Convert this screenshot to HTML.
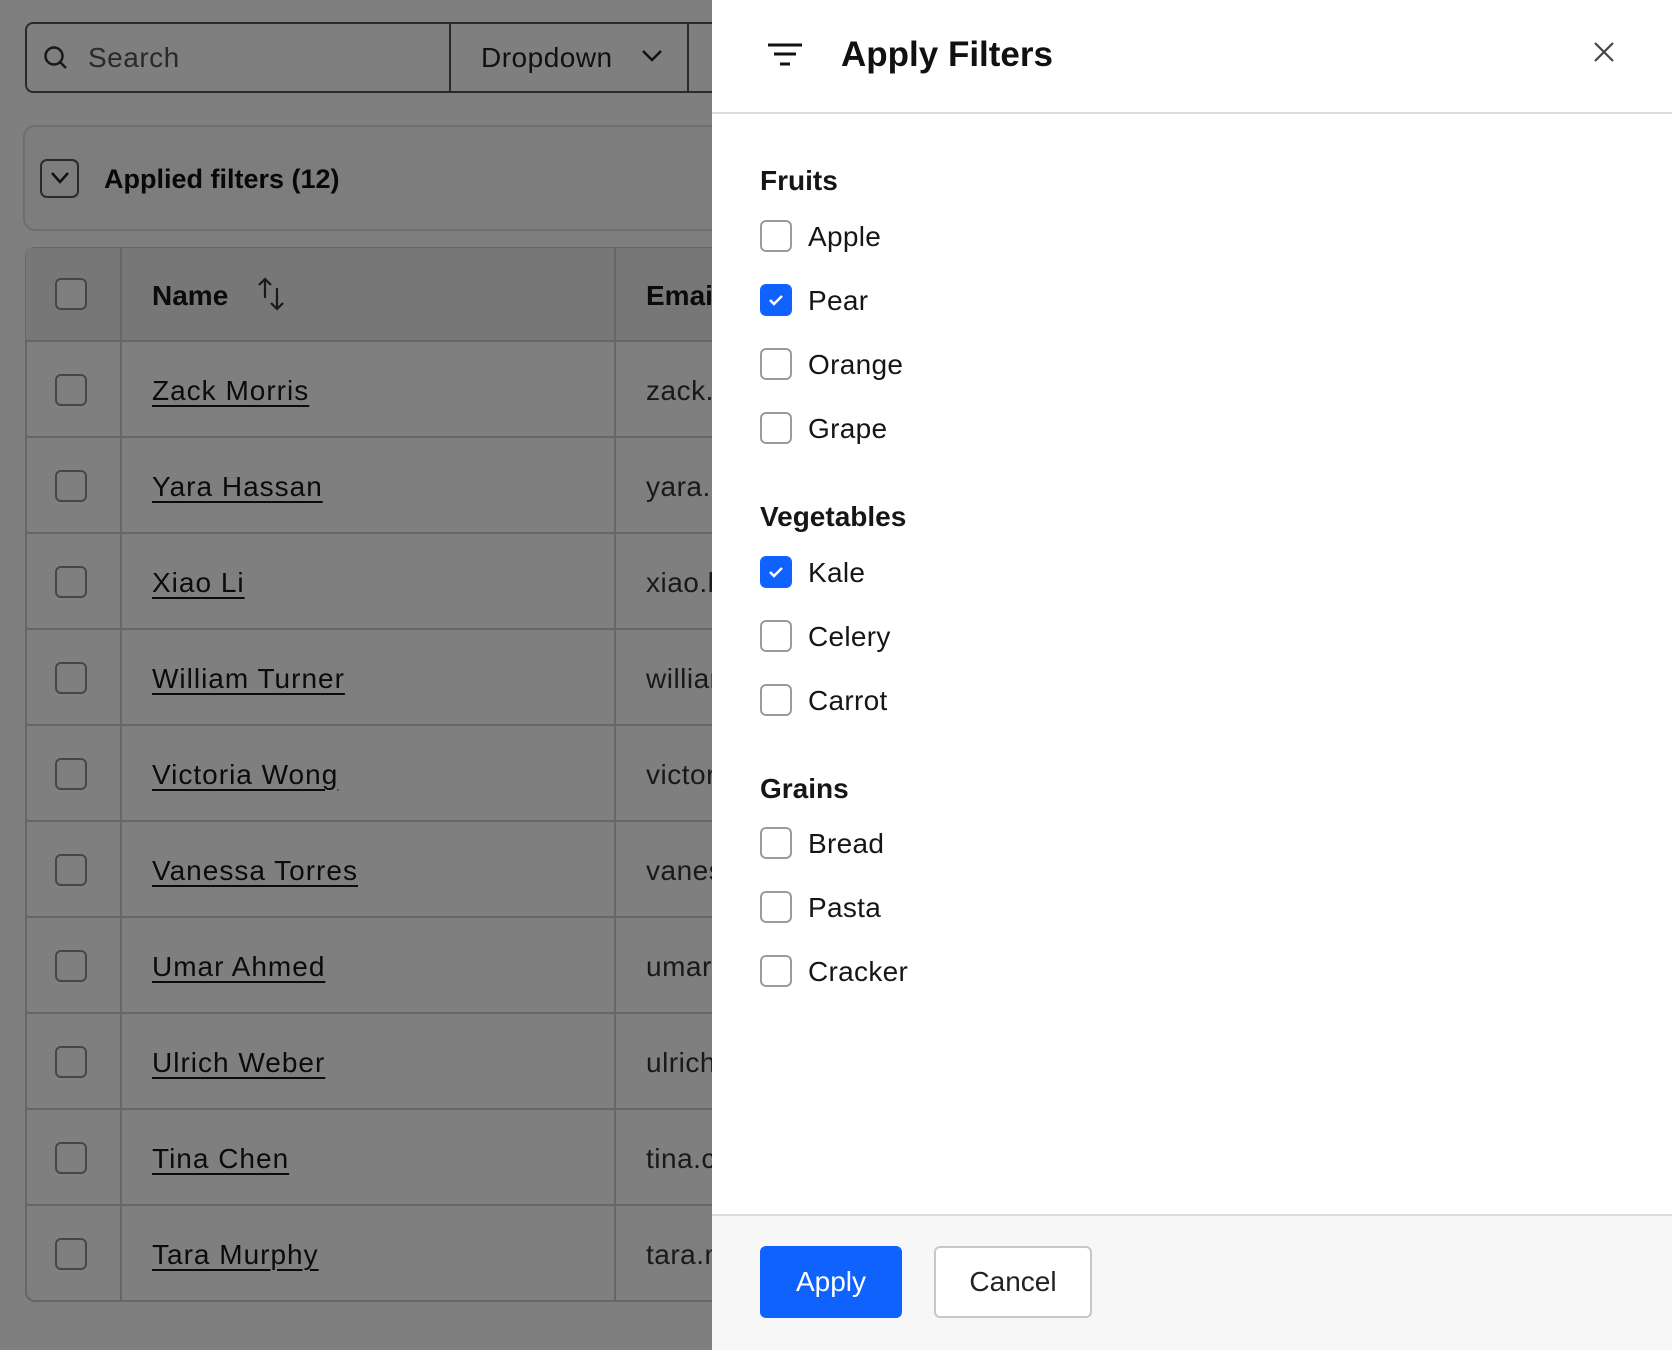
<!DOCTYPE html>
<html><head><meta charset="utf-8"><style>
*{box-sizing:border-box;margin:0;padding:0}
body{width:1672px;height:1350px;overflow:hidden;font-family:"Liberation Sans",sans-serif;background:#fff;position:relative;color:#161616}
.abs{position:absolute}
.cb{position:absolute;width:32px;height:32px;border:2px solid #8d8d94;border-radius:6px;background:#fff}
.name{position:absolute;left:152px;font-size:28px;letter-spacing:1px;text-decoration:underline;text-underline-offset:5px;text-decoration-thickness:2px}
.email{position:absolute;left:646px;font-size:28px;color:#333;letter-spacing:0.5px}
.hline{position:absolute;left:25px;width:700px;height:2px;background:#ccc}
.overlay{position:absolute;left:0;top:0;width:712px;height:1350px;background:rgba(0,0,0,0.5)}
.panel{position:absolute;left:712px;top:0;width:960px;height:1350px;background:#fff}
.sec{position:absolute;left:48px;font-size:28px;font-weight:bold}
.item{position:absolute;left:48px;height:32px}
.item .box{position:absolute;left:0;top:0;width:32px;height:32px;border:2px solid #9a9aa2;border-radius:6px}
.item .box.on{background:#0f62fe;border-color:#0f62fe}
.item span{position:absolute;left:48px;top:0px;font-size:28px;white-space:nowrap;line-height:34px;letter-spacing:0.3px}
</style></head><body>
<div class="abs" style="left:25px;top:22px;width:720px;height:71px;border:2px solid #555;border-radius:8px"></div>
<div class="abs" style="left:449px;top:22px;width:2px;height:71px;background:#555"></div>
<div class="abs" style="left:687px;top:22px;width:2px;height:71px;background:#555"></div>
<svg class="abs" style="left:42px;top:44px" width="28" height="28" viewBox="0 0 28 28"><circle cx="12" cy="12" r="8.5" fill="none" stroke="#333" stroke-width="2.5"/><path d="M18 18l6 6" stroke="#333" stroke-width="2.5"/></svg>
<div class="abs" style="left:88px;top:42px;font-size:28px;color:#555;letter-spacing:0.5px">Search</div>
<div class="abs" style="left:481px;top:42px;font-size:28px;color:#222;letter-spacing:0.5px">Dropdown</div>
<svg class="abs" style="left:640px;top:48px" width="24" height="16" viewBox="0 0 24 16"><path d="M3 3l9 9 9-9" fill="none" stroke="#222" stroke-width="2.5"/></svg>

<div class="abs" style="left:23px;top:125px;width:720px;height:106px;border:2px solid #ddd;border-radius:12px;background:#fafafa"></div>
<div class="abs" style="left:40px;top:159px;width:39px;height:39px;border:2px solid #555;border-radius:7px"></div>
<svg class="abs" style="left:48px;top:170px" width="24" height="16" viewBox="0 0 24 16"><path d="M4 3l8 9 8-9" fill="none" stroke="#222" stroke-width="2.5"/></svg>
<div class="abs" style="left:104px;top:164px;font-size:27px;font-weight:bold;color:#111">Applied filters (12)</div>

<div class="abs" style="left:25px;top:247px;width:720px;height:1055px;border:2px solid #ccc;border-radius:10px"></div>
<div class="abs" style="left:26px;top:248px;width:700px;height:93px;background:#eee"></div>
<div class="abs" style="left:120px;top:248px;width:2px;height:1053px;background:#ccc"></div>
<div class="abs" style="left:614px;top:248px;width:2px;height:1053px;background:#ccc"></div>
<div class="hline" style="top:340px"></div>
<div class="cb" style="left:55px;top:278px"></div>
<div class="abs" style="left:152px;top:280px;font-size:28px;font-weight:bold">Name</div>
<svg class="abs" style="left:256px;top:276px" width="32" height="36" viewBox="0 0 32 36"><path d="M9 22V3M3 9l6-6 6 6M21 12v21M15 27l6 6 6-6" fill="none" stroke="#333" stroke-width="2.2"/></svg>
<div class="abs" style="left:646px;top:280px;font-size:28px;font-weight:bold">Email</div>

<div class="cb" style="left:55px;top:374px"></div><div class="name" style="top:375px">Zack Morris</div><div class="email" style="top:375px">zack.morris</div><div class="hline" style="top:436px"></div>
<div class="cb" style="left:55px;top:470px"></div><div class="name" style="top:471px">Yara Hassan</div><div class="email" style="top:471px">yara.hassan</div><div class="hline" style="top:532px"></div>
<div class="cb" style="left:55px;top:566px"></div><div class="name" style="top:567px">Xiao Li</div><div class="email" style="top:567px">xiao.li</div><div class="hline" style="top:628px"></div>
<div class="cb" style="left:55px;top:662px"></div><div class="name" style="top:663px">William Turner</div><div class="email" style="top:663px">william</div><div class="hline" style="top:724px"></div>
<div class="cb" style="left:55px;top:758px"></div><div class="name" style="top:759px">Victoria Wong</div><div class="email" style="top:759px">victoria</div><div class="hline" style="top:820px"></div>
<div class="cb" style="left:55px;top:854px"></div><div class="name" style="top:855px">Vanessa Torres</div><div class="email" style="top:855px">vanessa</div><div class="hline" style="top:916px"></div>
<div class="cb" style="left:55px;top:950px"></div><div class="name" style="top:951px">Umar Ahmed</div><div class="email" style="top:951px">umar.ahmed</div><div class="hline" style="top:1012px"></div>
<div class="cb" style="left:55px;top:1046px"></div><div class="name" style="top:1047px">Ulrich Weber</div><div class="email" style="top:1047px">ulrich</div><div class="hline" style="top:1108px"></div>
<div class="cb" style="left:55px;top:1142px"></div><div class="name" style="top:1143px">Tina Chen</div><div class="email" style="top:1143px">tina.chen</div><div class="hline" style="top:1204px"></div>
<div class="cb" style="left:55px;top:1238px"></div><div class="name" style="top:1239px">Tara Murphy</div><div class="email" style="top:1239px">tara.murphy</div>

<div class="overlay"></div>

<div class="panel">
  <svg class="abs" style="left:54px;top:42px" width="38" height="26" viewBox="0 0 38 26"><path d="M2 3h34M8 12h22M14 22h10" stroke="#111" stroke-width="3"/></svg>
  <div class="abs" style="left:129px;top:35px;font-size:35px;font-weight:bold;color:#111">Apply Filters</div>
  <svg class="abs" style="left:880px;top:40px" width="24" height="24" viewBox="0 0 24 24"><path d="M3 3l18 18M21 3L3 21" stroke="#444" stroke-width="2.2"/></svg>
  <div class="abs" style="left:0;top:112px;width:960px;height:2px;background:#dcdce0"></div>

  <div class="sec" style="top:165px">Fruits</div>
  <div class="item" style="top:220px"><div class="box"></div><span>Apple</span></div>
  <div class="item" style="top:284px"><div class="box on"><svg width="28" height="28" viewBox="0 0 28 28"><path d="M8 14l4 4 8-8" fill="none" stroke="#fff" stroke-width="2.5"/></svg></div><span>Pear</span></div>
  <div class="item" style="top:348px"><div class="box"></div><span>Orange</span></div>
  <div class="item" style="top:412px"><div class="box"></div><span>Grape</span></div>

  <div class="sec" style="top:501px">Vegetables</div>
  <div class="item" style="top:556px"><div class="box on"><svg width="28" height="28" viewBox="0 0 28 28"><path d="M8 14l4 4 8-8" fill="none" stroke="#fff" stroke-width="2.5"/></svg></div><span>Kale</span></div>
  <div class="item" style="top:620px"><div class="box"></div><span>Celery</span></div>
  <div class="item" style="top:684px"><div class="box"></div><span>Carrot</span></div>

  <div class="sec" style="top:773px">Grains</div>
  <div class="item" style="top:827px"><div class="box"></div><span>Bread</span></div>
  <div class="item" style="top:891px"><div class="box"></div><span>Pasta</span></div>
  <div class="item" style="top:955px"><div class="box"></div><span>Cracker</span></div>

  <div class="abs" style="left:0;top:1214px;width:960px;height:136px;background:#f7f7f8;border-top:2px solid #dcdce0"></div>
  <div class="abs" style="left:48px;top:1246px;width:142px;height:72px;background:#0f62fe;border-radius:6px;color:#fff;font-size:28px;text-align:center;line-height:72px">Apply</div>
  <div class="abs" style="left:222px;top:1246px;width:158px;height:72px;background:#fff;border:2px solid #c6c6cc;border-radius:6px;color:#222;font-size:28px;text-align:center;line-height:68px">Cancel</div>
</div>
</body></html>
